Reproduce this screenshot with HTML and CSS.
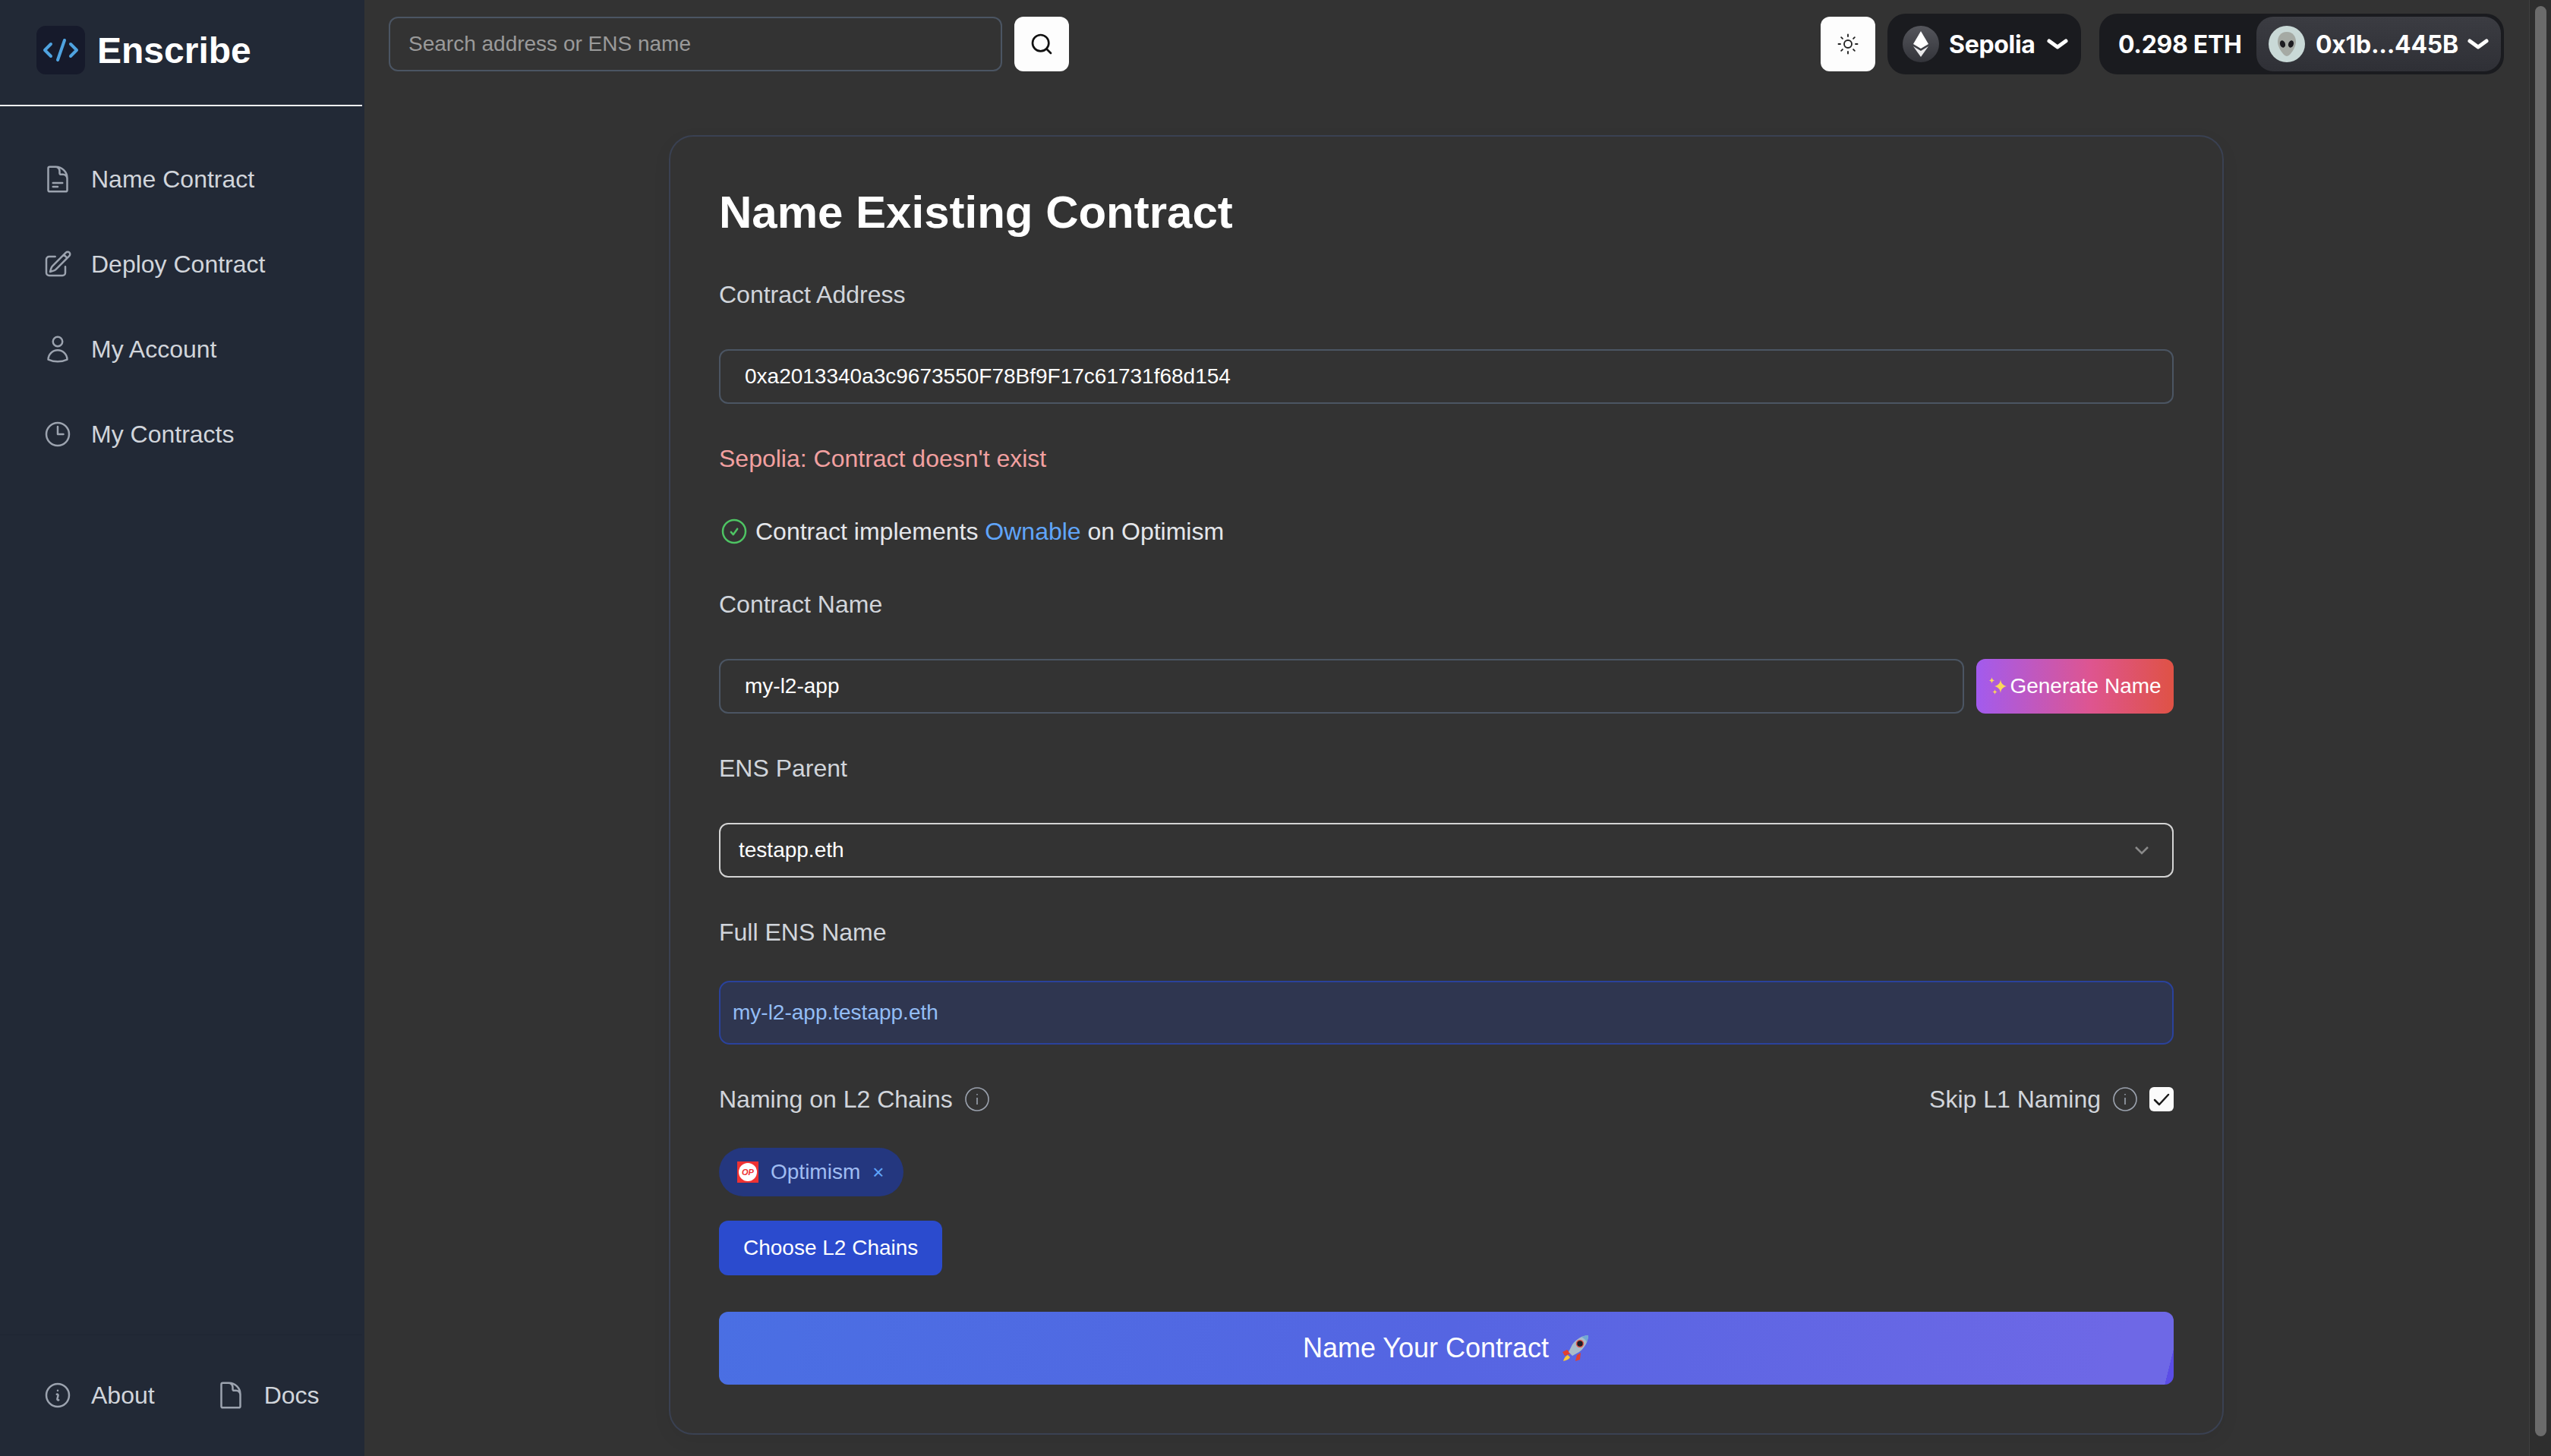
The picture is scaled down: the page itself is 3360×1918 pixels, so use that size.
FILE: index.html
```html
<!DOCTYPE html>
<html lang="en">
<head>
  <meta charset="UTF-8">
  <meta name="viewport" content="width=device-width, initial-scale=1.0">
  <title>Enscribe - Name Contract</title>
  <link rel="stylesheet" href="styles.css">
</head>
<body>
<div class="app">

  <aside class="sidebar">
    <div class="brand">
      <span class="brand-logo">
        <svg viewBox="0 0 64 64" width="64" height="64" fill="none" stroke="#4fa3e0" stroke-width="4" stroke-linecap="round" stroke-linejoin="round">
          <path d="M19 24 L11 32 L19 40"/>
          <path d="M37 19 L28 45"/>
          <path d="M45 24 L53 32 L45 40"/>
        </svg>
      </span>
      <span class="brand-name">Enscribe</span>
    </div>

    <nav class="nav">
      <a class="nav-item">
        <svg class="nav-icon" viewBox="0 0 24 24"><path d="M19.5 14.25v-2.625a3.375 3.375 0 0 0-3.375-3.375h-1.5A1.125 1.125 0 0 1 13.5 7.125v-1.5a3.375 3.375 0 0 0-3.375-3.375H8.25m0 12.75h7.5m-7.5 3H12M10.5 2.25H5.625c-.621 0-1.125.504-1.125 1.125v17.25c0 .621.504 1.125 1.125 1.125h12.75c.621 0 1.125-.504 1.125-1.125V11.25a9 9 0 0 0-9-9Z"/></svg>
        Name Contract
      </a>
      <a class="nav-item">
        <svg class="nav-icon" viewBox="0 0 24 24"><path d="m16.862 4.487 1.687-1.688a1.875 1.875 0 1 1 2.652 2.652L10.582 16.07a4.5 4.5 0 0 1-1.897 1.13L6 18l.8-2.685a4.5 4.5 0 0 1 1.13-1.897l8.932-8.931Zm0 0L19.5 7.125M18 14v4.75A2.25 2.25 0 0 1 15.75 21H5.25A2.25 2.25 0 0 1 3 18.75V8.25A2.25 2.25 0 0 1 5.25 6H10"/></svg>
        Deploy Contract
      </a>
      <a class="nav-item">
        <svg class="nav-icon" viewBox="0 0 24 24"><path d="M15.75 6a3.75 3.75 0 1 1-7.5 0 3.75 3.75 0 0 1 7.5 0ZM4.501 20.118a7.5 7.5 0 0 1 14.998 0A17.933 17.933 0 0 1 12 21.75c-2.676 0-5.216-.584-7.499-1.632Z"/></svg>
        My Account
      </a>
      <a class="nav-item">
        <svg class="nav-icon" viewBox="0 0 24 24"><path d="M12 6v6h4.5m4.5 0a9 9 0 1 1-18 0 9 9 0 0 1 18 0Z"/></svg>
        My Contracts
      </a>
    </nav>

    <div class="sidebar-footer">
      <a class="nav-item">
        <svg class="nav-icon" viewBox="0 0 24 24"><path d="m11.25 11.25.041-.02a.75.75 0 0 1 1.063.852l-.708 2.836a.75.75 0 0 0 1.063.853l.041-.021M21 12a9 9 0 1 1-18 0 9 9 0 0 1 18 0Zm-9-3.75h.008v.008H12V8.25Z"/></svg>
        About
      </a>
      <a class="nav-item">
        <svg class="nav-icon" viewBox="0 0 24 24"><path d="M19.5 14.25v-2.625a3.375 3.375 0 0 0-3.375-3.375h-1.5A1.125 1.125 0 0 1 13.5 7.125v-1.5a3.375 3.375 0 0 0-3.375-3.375H8.25m2.25 0H5.625c-.621 0-1.125.504-1.125 1.125v17.25c0 .621.504 1.125 1.125 1.125h12.75c.621 0 1.125-.504 1.125-1.125V11.25a9 9 0 0 0-9-9Z"/></svg>
        Docs
      </a>
    </div>
  </aside>

  <div class="main">
    <header class="topbar">
      <div class="search">
        <input class="search-input" type="text" placeholder="Search address or ENS name">
        <button class="icon-btn">
          <svg viewBox="0 0 24 24" width="32" height="32" fill="none" stroke="#111" stroke-width="2" stroke-linecap="round"><circle cx="11" cy="11" r="8"/><path d="m21 21-4.3-4.3"/></svg>
        </button>
      </div>

      <div class="wallet">
        <button class="icon-btn">
          <svg viewBox="0 0 24 24" width="30" height="30" fill="none" stroke="#222" stroke-width="1.5" stroke-linecap="round"><circle cx="12" cy="12" r="4"/><path d="M12 2v2M12 20v2M4.93 4.93l1.41 1.41M17.66 17.66l1.41 1.41M2 12h2M20 12h2M6.34 17.66l-1.41 1.41M19.07 4.93l-1.41 1.41"/></svg>
        </button>

        <div class="pill chain-pill">
          <span class="chain-icon">
            <svg viewBox="0 0 48 48" width="48" height="48"><path d="M24 7 L14 24 L24 30 L34 24Z" fill="#fff"/><path d="M14 27 L24 41 L34 27 L24 33Z" fill="#e8e8ea"/></svg>
          </span>
          <span>Sepolia</span>
          <svg class="pill-chevron" viewBox="0 0 28 14"><path d="M3 3 L14 11 L25 3"/></svg>
        </div>

        <div class="pill account-pill">
          <span class="balance">0.298 ETH</span>
          <div class="account">
            <span class="avatar">
              <svg viewBox="0 0 48 48" width="48" height="48">
                <path d="M24 8c-8 0-12 6-12 13 0 8 8 19 12 19s12-11 12-19c0-7-4-13-12-13Z" fill="#a5aaa4"/>
                <ellipse cx="18.500" cy="24" rx="3.400" ry="4.800" fill="#1c1c20" transform="rotate(-20 18.500 24)"/>
                <ellipse cx="29.500" cy="24" rx="3.400" ry="4.800" fill="#1c1c20" transform="rotate(20 29.500 24)"/>
              </svg>
            </span>
            <span>0x1b...445B</span>
            <svg class="pill-chevron" viewBox="0 0 28 14"><path d="M3 3 L14 11 L25 3"/></svg>
          </div>
        </div>
      </div>
    </header>

    <main class="card">
      <h1 class="card-title">Name Existing Contract</h1>

      <div class="form">
        <div class="field">
          <label class="label">Contract Address</label>
          <input class="input" type="text" value="0xa2013340a3c9673550F78Bf9F17c61731f68d154">
        </div>

        <p class="error">Sepolia: Contract doesn't exist</p>

        <p class="status">
          <svg class="status-icon" viewBox="0 0 24 24"><path d="M9.5 12.5 11.25 14.5 14.5 10M21 12a9 9 0 1 1-18 0 9 9 0 0 1 18 0Z"/></svg>
          <span>Contract implements <a class="link">Ownable</a> on Optimism</span>
        </p>

        <div class="field">
          <label class="label">Contract Name</label>
          <div class="name-row">
            <input class="input" type="text" value="my-l2-app">
            <button class="generate-btn">
              <svg viewBox="0 0 26 28" width="26" height="28" fill="#fbd85a"><path d="M16 5c.6 5 2.600 7.500 8 9-5.400 1.500-7.400 4-8 9-.6-5-2.600-7.500-8-9 5.400-1.500 7.400-4 8-9Z"/><path d="M4.500 2c.3 2.500 1 3.500 3.500 4.300-2.500.8-3.200 1.800-3.500 4.200-.3-2.400-1-3.400-3.500-4.200C3.500 5.500 4.200 4.500 4.500 2Z"/><path d="M8.500 18c.2 2 .9 3 3 3.600-2.100.6-2.800 1.600-3 3.400-.2-1.800-.9-2.800-3-3.400 2.100-.6 2.800-1.600 3-3.600Z"/></svg>
              Generate Name
            </button>
          </div>
        </div>

        <div class="field">
          <label class="label">ENS Parent</label>
          <div class="select">
            <span>testapp.eth</span>
            <svg viewBox="0 0 20 12" width="20" height="12" fill="none" stroke="#8a8a8a" stroke-width="2.500"><path d="M2 2 L10 10 L18 2"/></svg>
          </div>
        </div>

        <div class="field field-tight">
          <label class="label">Full ENS Name</label>
          <div class="ens-preview">my-l2-app.testapp.eth</div>
        </div>

        <div class="l2-section">
          <div class="l2-row">
            <div class="l2-label">
              <span class="label">Naming on L2 Chains</span>
              <svg class="info-icon" viewBox="0 0 32 32"><circle cx="16" cy="16" r="15"/><path d="M16 14v9M16 9v1.600"/></svg>
            </div>
            <div class="l2-label">
              <span class="label">Skip L1 Naming</span>
              <svg class="info-icon" viewBox="0 0 32 32"><circle cx="16" cy="16" r="15"/><path d="M16 14v9M16 9v1.600"/></svg>
              <span class="checkbox">
                <svg viewBox="0 0 32 32" width="32" height="32" fill="none" stroke="#1a1a1a" stroke-width="2.500" stroke-linecap="round" stroke-linejoin="round"><path d="M7 17 L13 23 L25 10"/></svg>
              </span>
            </div>
          </div>

          <div class="chip">
            <svg class="chip-logo" viewBox="0 0 28 28">
              <rect width="28" height="28" fill="#ee3233"/>
              <circle cx="14" cy="14" r="12" fill="#fff"/>
              <text x="14" y="18" text-anchor="middle" class="chip-logo-text">OP</text>
            </svg>
            <span>Optimism</span>
            <span class="chip-close">×</span>
          </div>

          <button class="choose-btn">Choose L2 Chains</button>
        </div>

        <button class="submit-btn">
          Name Your Contract
          <svg viewBox="0 0 38 36" width="38" height="36">
            <path d="M8 20 L2 23 L5 28 L13 25Z" fill="#e2402f"/>
            <path d="M21 27 L19 35 L25 33 L26 24Z" fill="#e2402f"/>
            <path d="M9 27 C5 29 4 32 3 35 C7 34 10 33 12 30Z" fill="#fbc934"/>
            <path d="M36 1 C28 1 20 6 15 13 L10 23 L15 28 L24 23 C31 18 36 9 36 1Z" fill="#a9bccb"/>
            <path d="M36 1 C33 1 30 2 27 3 C30 5 33 7 34 10 C35 7 36 4 36 1Z" fill="#6fa8d6"/>
            <circle cx="25" cy="12" r="4.500" fill="#1e1e28" stroke="#e2584f" stroke-width="1.500"/>
          </svg>
        </button>
      </div>
    </main>
  </div>

  <div class="scrollbar"><div class="scrollbar-thumb"></div></div>
</div>
</body>
</html>
```

FILE: styles.css
```css
* {
  box-sizing: border-box;
}
html, body {
  margin: 0;
  height: 100%;
}
body {
  font-family: "Liberation Sans", Arial, sans-serif;
  background-color: #333;
  color: #fff;
  overflow: hidden;
}
p, h1 {
  margin: 0;
}
input, button {
  font-family: inherit;
}
button {
  border: none;
  cursor: pointer;
}
svg {
  display: block;
  flex-shrink: 0;
}
.app {
  display: flex;
  height: 1918px;
}

/* sidebar */
.sidebar {
  width: 480px;
  flex-shrink: 0;
  display: flex;
  flex-direction: column;
  background-color: #222936;
  border-right: 3px solid #222936;
}
.brand {
  height: 140px;
  flex-shrink: 0;
  display: flex;
  align-items: center;
  gap: 16px;
  padding: 0 0 6px 48px;
  border-bottom: 2px solid #f3f4f6;
}
.brand-logo {
  width: 64px;
  height: 64px;
  border-radius: 12px;
  background-color: #161a2b;
}
.brand-name {
  font-size: 48px;
  font-weight: 700;
}
.nav {
  flex: 1;
  padding-top: 40px;
}
.nav-item {
  height: 112px;
  display: flex;
  align-items: center;
  gap: 24px;
  padding-left: 56px;
  font-size: 32px;
  color: #d1d5db;
}
.nav-icon {
  width: 40px;
  height: 40px;
  fill: none;
  stroke: #9ca3af;
  stroke-width: 1.5;
  stroke-linecap: round;
  stroke-linejoin: round;
}
.sidebar-footer {
  display: flex;
  height: 160px;
  padding-top: 23px;
  border-top: 1px solid #1f2632;
}
.sidebar-footer .nav-item + .nav-item {
  padding-left: 0;
  gap: 24px;
  margin-left: 80px;
}

/* top bar */
.main {
  flex: 1;
  min-width: 0;
  padding-right: 1px;
}
.topbar {
  display: flex;
  justify-content: space-between;
  align-items: center;
  height: 116px;
  padding: 0 32px;
}
.search {
  display: flex;
  gap: 16px;
}
.search-input {
  width: 808px;
  height: 72px;
  padding: 0 24px;
  background: transparent;
  border: 2px solid #4b5563;
  border-radius: 12px;
  font-size: 28px;
  color: #fff;
}
.search-input::placeholder {
  color: #9a9a9a;
}
.icon-btn {
  width: 72px;
  height: 72px;
  display: flex;
  align-items: center;
  justify-content: center;
  background-color: #fdfdfd;
  border-radius: 12px;
  padding: 0;
}
.wallet {
  display: flex;
  align-items: center;
  gap: 24px;
}
.wallet .icon-btn {
  margin-right: -8px;
}
.pill {
  height: 80px;
  display: flex;
  align-items: center;
  background-color: #1a1b1f;
  border-radius: 24px;
  font-family: Inter, "Liberation Sans", sans-serif;
  font-size: 32px;
  font-weight: 700;
  letter-spacing: -0.3px;
}
.chain-pill {
  width: 255px;
  padding-left: 20px;
  gap: 13px;
}
.chain-icon {
  width: 48px;
  height: 48px;
  border-radius: 50%;
  background: linear-gradient(#55565c, #33343a);
}
.pill-chevron {
  width: 28px;
  height: 14px;
  fill: none;
  stroke: #fff;
  stroke-width: 5;
  stroke-linecap: round;
  stroke-linejoin: round;
  margin-left: 2px;
}
.account-pill {
  width: 533px;
  padding: 4px;
}
.balance {
  flex: 1;
  padding-left: 21px;
}
.account {
  width: 322px;
  height: 72px;
  display: flex;
  align-items: center;
  gap: 14px;
  padding-left: 16px;
  background: linear-gradient(#3b3c42, #2f3036);
  border-radius: 22px;
}
.account .pill-chevron {
  margin-left: -2px;
}
.avatar {
  width: 48px;
  height: 48px;
  border-radius: 50%;
  background-color: #c9d9d7;
}

/* form card */
.card {
  width: 2048px;
  height: 1712px;
  margin: 62px auto 0;
  padding: 64px 64px 0;
  border: 2px solid #3a4152;
  border-radius: 32px;
  box-shadow: 0 8px 24px rgba(0, 0, 0, 0.06);
}
.card-title {
  font-size: 60px;
  line-height: 72px;
  font-weight: 700;
  margin-bottom: 48px;
}
.form {
  display: flex;
  flex-direction: column;
  gap: 48px;
}
.field {
  display: flex;
  flex-direction: column;
  gap: 48px;
}
.field-tight {
  gap: 40px;
}
.label {
  font-size: 32px;
  line-height: 48px;
  color: #d1d5db;
}
.input {
  width: 100%;
  height: 72px;
  padding: 0 32px;
  background: transparent;
  border: 2px solid #4b5563;
  border-radius: 12px;
  font-size: 28px;
  color: #fff;
}
.error {
  font-size: 32px;
  line-height: 48px;
  color: #f2a0a0;
}
.status {
  display: flex;
  align-items: center;
  gap: 8px;
  font-size: 32px;
  line-height: 48px;
  color: #e5e7eb;
}
.status-icon {
  width: 40px;
  height: 40px;
  fill: none;
  stroke: #4ec463;
  stroke-width: 1.5;
  stroke-linecap: round;
  stroke-linejoin: round;
}
.link {
  color: #60a5fa;
}
.name-row {
  display: flex;
  gap: 16px;
}
.name-row .input {
  flex: 1;
  min-width: 0;
}
.generate-btn {
  width: 260px;
  height: 72px;
  display: flex;
  align-items: center;
  justify-content: center;
  gap: 2px;
  padding: 0;
  background: linear-gradient(90deg, #a25bee, #de5590 58%, #df5245);
  border-radius: 12px;
  font-size: 28px;
  color: #fff;
}
.select {
  height: 72px;
  display: flex;
  align-items: center;
  justify-content: space-between;
  padding: 0 30px 0 24px;
  border: 2px solid #d4d4d4;
  border-radius: 12px;
  font-size: 28px;
}
.ens-preview {
  height: 84px;
  display: flex;
  align-items: center;
  padding: 0 16px;
  background-color: #2f3650;
  border: 2px solid #2a429c;
  border-radius: 14px;
  font-size: 28px;
  color: #93bdf5;
}
.l2-section {
  display: flex;
  flex-direction: column;
  align-items: flex-start;
}
.l2-row {
  width: 100%;
  display: flex;
  justify-content: space-between;
  margin-bottom: 40px;
}
.l2-label {
  display: flex;
  align-items: center;
  gap: 16px;
}
.info-icon {
  width: 32px;
  height: 32px;
  fill: none;
  stroke: #9ca3af;
  stroke-width: 1.6;
}
.checkbox {
  width: 32px;
  height: 32px;
  border-radius: 6px;
  background-color: #fbfbfb;
}
.chip {
  height: 64px;
  display: flex;
  align-items: center;
  padding: 0 26px 0 24px;
  background-color: #24377f;
  border-radius: 32px;
  font-size: 28px;
  color: #a0bdf2;
  margin-bottom: 32px;
}
.chip-logo {
  width: 28px;
  height: 28px;
  margin-right: 16px;
}
.chip-logo-text {
  font-size: 11px;
  font-weight: 700;
  font-style: italic;
  fill: #ee3233;
}
.chip-close {
  margin-left: 16px;
  font-size: 26px;
  color: #60a5fa;
}
.choose-btn {
  height: 72px;
  padding: 0 32px;
  background-color: #2b4bce;
  border-radius: 12px;
  font-size: 28px;
  color: #fff;
}
.submit-btn {
  height: 96px;
  display: flex;
  align-items: center;
  justify-content: center;
  gap: 16px;
  background: linear-gradient(104deg, #4a6fe3 0%, #5565e2 50%, #6e68e6 96%, #6e68e6 99.4%, #5b4de6 99.4%);
  border-radius: 12px;
  font-size: 36px;
  color: #fff;
}

/* scrollbar strip */
.scrollbar {
  width: 29px;
  flex-shrink: 0;
  padding: 8px 6px 0 7px;
  background-color: #2e2e2e;
  border-left: 1px solid #404040;
}
.scrollbar-thumb {
  height: 1884px;
  border-radius: 8px;
  background-color: #6b6b6b;
}
```
